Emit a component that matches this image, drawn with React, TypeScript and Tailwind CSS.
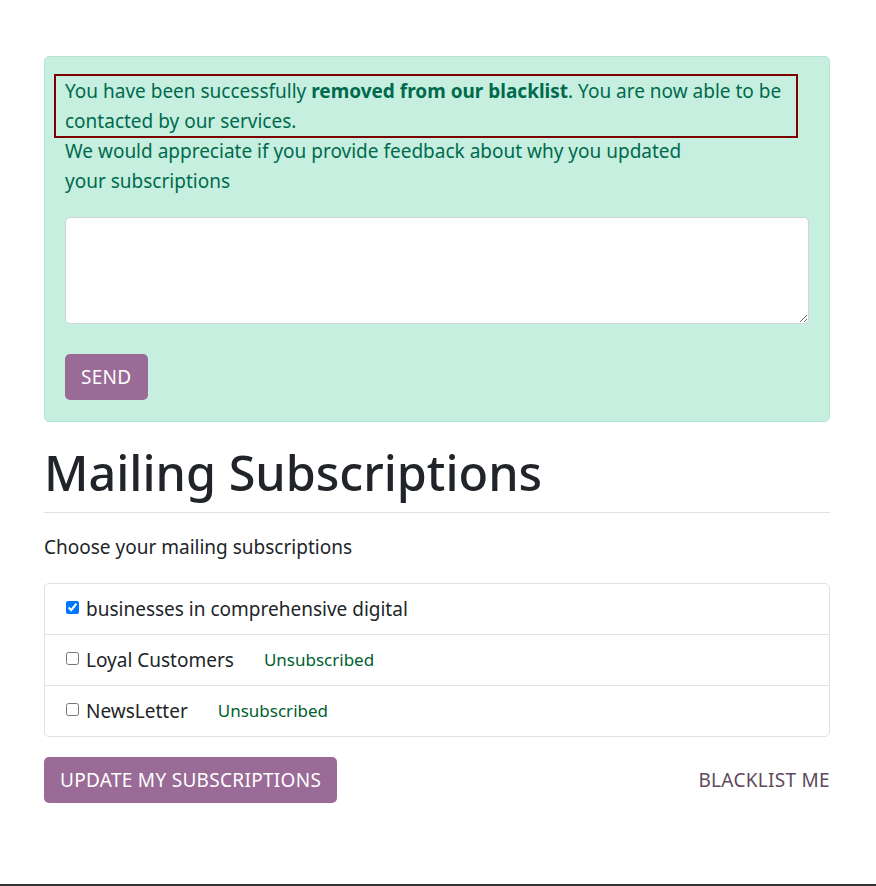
import React from "react";

const topics = [
  { name: "businesses in comprehensive digital", subscribed: true },
  { name: "Loyal Customers", subscribed: false },
  { name: "NewsLetter", subscribed: false },
];

export default function App() {
  return (
    <div className="min-h-[886px] bg-white flex flex-col text-[#212529] font-['Noto_Sans',sans-serif]">
      <div className="w-[786px] ml-[44px] pt-[56px]">
        {/* Feedback alert */}
        <div className="bg-[#c6efe0] border border-[#b3e6d2] rounded-[5px] px-[20px] pt-[20px] pb-[21px] text-[#006a4c] text-[19px] leading-[30px]">
          <div className="-ml-[9px] mr-[13px] -mt-[1px] pl-[9px] outline-2 outline-[#7b0000]">
            You have been successfully <b className="font-bold">removed from our blacklist</b>. You are now able to be
            <br />
            contacted by our services.
          </div>
          <p>
            We would appreciate if you provide feedback about why you updated
            <br />
            your subscriptions
          </p>
          <textarea className="mt-[21px] block w-full h-[107px] bg-white border border-[#ced4da] rounded-[5px] p-2 outline-none" />
          <button className="mt-[30px] h-[46px] px-[16px] bg-[#9a6b97] text-white rounded-[5px] text-[19px] tracking-[0.3px]">
            SEND
          </button>
        </div>

        {/* Subscriptions */}
        <h1 className="mt-[22px] text-[48.5px] leading-[56px] font-medium text-[#212529]">Mailing Subscriptions</h1>
        <hr className="mt-[12px] border-t border-[#dee2e6]" />
        <p className="mt-[21px] text-[19px] leading-[27px]">Choose your mailing subscriptions</p>

        <ul className="mt-[22px] border border-[#dee2e6] rounded-[5px]">
          {topics.map((t, i) => (
            <li
              key={t.name}
              className={`flex items-center pl-[21px] text-[19px] ${i > 0 ? "h-[51px] border-t border-[#dee2e6]" : "h-[50px]"}`}
            >
              <input
                type="checkbox"
                checked={t.subscribed}
                readOnly
                className="w-[13px] h-[13px] mr-[7px] -mt-[3px] accent-[#0075ff]"
              />
              <span>{t.name}</span>
              {!t.subscribed && (
                <span className="ml-[30px] text-[17px] text-[#00602f]">Unsubscribed</span>
              )}
            </li>
          ))}
        </ul>

        <div className="mt-[20px] flex items-center justify-between">
          <button className="h-[46px] px-[16px] bg-[#9a6b97] text-white rounded-[5px] text-[19px] tracking-[0.3px]">
            UPDATE MY SUBSCRIPTIONS
          </button>
          <a className="text-[19px] tracking-[0.3px] text-[#5d4a5b]">BLACKLIST ME</a>
        </div>
      </div>
      <div className="mt-auto h-[2px] bg-[#333333]" />
    </div>
  );
}
